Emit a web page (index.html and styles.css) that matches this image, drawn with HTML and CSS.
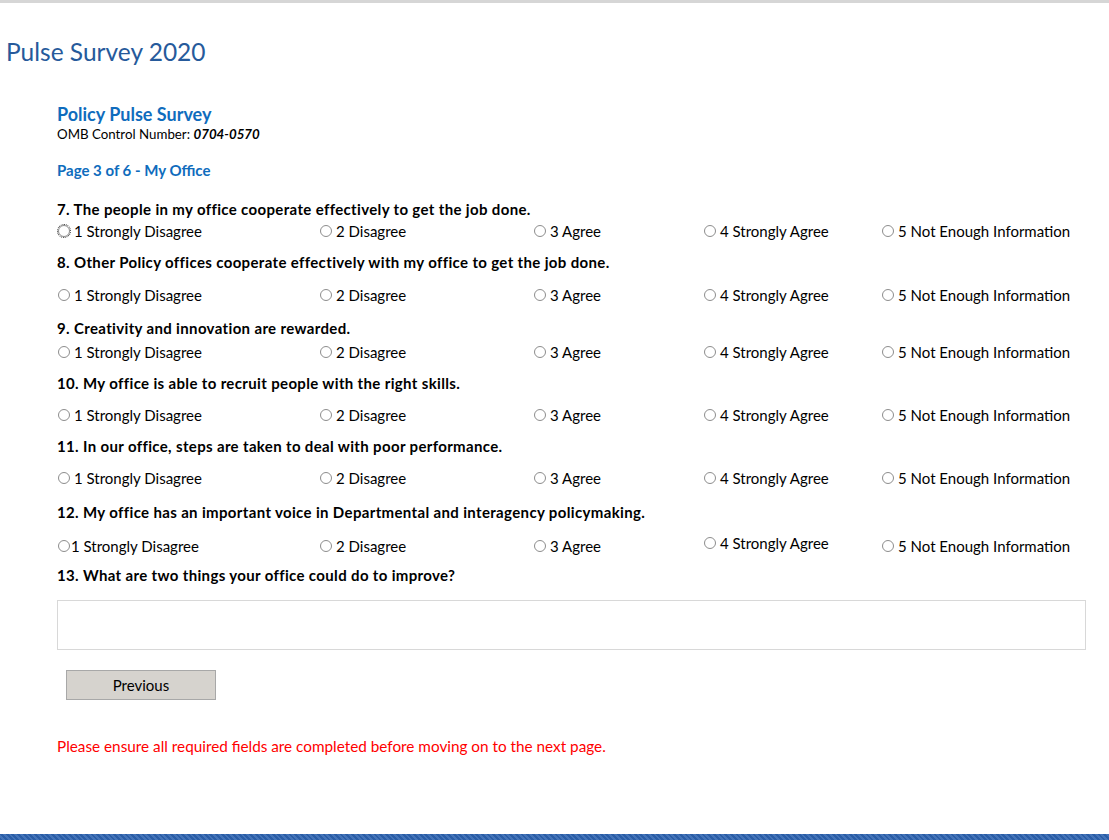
FILE: index.html
```html
<!DOCTYPE html>
<html lang="en">
<head>
    <meta charset="UTF-8">
    <meta name="viewport" content="width=device-width, initial-scale=1.0">
    <title>Pulse Survey 2020</title>
    <link rel="stylesheet" href="styles.css">
</head>
<body>
    <div class="page">
        <h1 class="site-title">Pulse Survey 2020</h1>

        <div class="survey">
            <h2 class="survey-name">Policy Pulse Survey</h2>
            <div class="omb">OMB Control Number: <strong><em>0704-0570</em></strong></div>

            <h3 class="page-title">Page 3 of 6 - My Office</h3>

            <div class="question q-first">
                <p class="q-label">7. The people in my office cooperate effectively to get the job done.</p>
                <div class="options">
                    <label><input type="radio" name="q7" class="focused"> 1 Strongly Disagree</label>
                    <label><input type="radio" name="q7"> 2 Disagree</label>
                    <label><input type="radio" name="q7"> 3 Agree</label>
                    <label><input type="radio" name="q7"> 4 Strongly Agree</label>
                    <label><input type="radio" name="q7"> 5 Not Enough Information</label>
                </div>
            </div>

            <div class="question q-loose">
                <p class="q-label">8. Other Policy offices cooperate effectively with my office to get the job done.</p>
                <div class="options">
                    <label><input type="radio" name="q8"> 1 Strongly Disagree</label>
                    <label><input type="radio" name="q8"> 2 Disagree</label>
                    <label><input type="radio" name="q8"> 3 Agree</label>
                    <label><input type="radio" name="q8"> 4 Strongly Agree</label>
                    <label><input type="radio" name="q8"> 5 Not Enough Information</label>
                </div>
            </div>

            <div class="question q-short">
                <p class="q-label">9. Creativity and innovation are rewarded.</p>
                <div class="options">
                    <label><input type="radio" name="q9"> 1 Strongly Disagree</label>
                    <label><input type="radio" name="q9"> 2 Disagree</label>
                    <label><input type="radio" name="q9"> 3 Agree</label>
                    <label><input type="radio" name="q9"> 4 Strongly Agree</label>
                    <label><input type="radio" name="q9"> 5 Not Enough Information</label>
                </div>
            </div>

            <div class="question q-mid">
                <p class="q-label">10. My office is able to recruit people with the right skills.</p>
                <div class="options">
                    <label><input type="radio" name="q10"> 1 Strongly Disagree</label>
                    <label><input type="radio" name="q10"> 2 Disagree</label>
                    <label><input type="radio" name="q10"> 3 Agree</label>
                    <label><input type="radio" name="q10"> 4 Strongly Agree</label>
                    <label><input type="radio" name="q10"> 5 Not Enough Information</label>
                </div>
            </div>

            <div class="question q-mid">
                <p class="q-label">11. In our office, steps are taken to deal with poor performance.</p>
                <div class="options">
                    <label><input type="radio" name="q11"> 1 Strongly Disagree</label>
                    <label><input type="radio" name="q11"> 2 Disagree</label>
                    <label><input type="radio" name="q11"> 3 Agree</label>
                    <label><input type="radio" name="q11"> 4 Strongly Agree</label>
                    <label><input type="radio" name="q11"> 5 Not Enough Information</label>
                </div>
            </div>

            <div class="question q-wide">
                <p class="q-label">12. My office has an important voice in Departmental and interagency policymaking.</p>
                <div class="options">
                    <label class="nogap"><input type="radio" name="q12">1 Strongly Disagree</label>
                    <label><input type="radio" name="q12"> 2 Disagree</label>
                    <label><input type="radio" name="q12"> 3 Agree</label>
                    <label class="raised"><input type="radio" name="q12"> 4 Strongly Agree</label>
                    <label><input type="radio" name="q12"> 5 Not Enough Information</label>
                </div>
            </div>

            <div class="question q-text">
                <p class="q-label">13. What are two things your office could do to improve?</p>
                <textarea class="answer-box"></textarea>
            </div>

            <button class="btn-prev">Previous</button>

            <p class="error">Please ensure all required fields are completed before moving on to the next page.</p>
        </div>
    </div>
    <footer class="bottom-bar"></footer>
</body>
</html>
```

FILE: styles.css
```css
body {
    margin: 0;
    font-family: 'Lato', 'Liberation Sans', sans-serif;
    color: #000;
    background: #fff;
    min-height: 100vh;
    display: flex;
    flex-direction: column;
    border-top: 3px solid #d6d6d6;
    box-sizing: border-box;
}

.page {
    flex: 1;
}

.site-title {
    margin: 34px 0 0 6px;
    font-size: 24.5px;
    font-weight: normal;
    color: #265a9b;
    line-height: 30px;
}

.survey {
    margin: 36px 0 0 57px;
    width: 1029px;
}

.survey-name {
    margin: 0;
    font-size: 18px;
    line-height: 22px;
    color: #0f6cbd;
}

.omb {
    font-size: 13.3px;
    line-height: 18px;
}

.page-title {
    margin: 17px 0 0;
    font-size: 15px;
    line-height: 20px;
    color: #0f6cbd;
}

.question {
    margin-top: 10px;
}

.q-label {
    margin: 0;
    font-size: 15px;
    font-weight: bold;
    letter-spacing: 0.35px;
    line-height: 21px;
}

.options {
    display: grid;
    grid-template-columns: 262px 214px 170px 178px auto;
    font-size: 15px;
    line-height: 22px;
}

/* spacing differs a little from row to row */
.q-first {
    margin-top: 19px;
}

.q-loose .options {
    margin-top: 11px;
}

.q-short {
    margin-top: 12px;
}

.q-short .options {
    margin-top: 2px;
}

.q-mid .options {
    margin-top: 10px;
}

.q-wide {
    margin-top: 13px;
}

.q-wide .options {
    margin-top: 12px;
}

.q-text {
    margin-top: 8px;
}

.options label {
    display: flex;
    align-items: center;
    white-space: nowrap;
}

.options label.raised {
    position: relative;
    top: -3px;
}

.options input {
    -webkit-appearance: none;
    appearance: none;
    width: 12px;
    height: 12px;
    margin: 0 4px 0 1px;
    border: 1px solid #8d8d8d;
    border-radius: 50%;
    background: #fff;
}

.options .nogap input {
    margin-right: 1px;
}

.options input.focused {
    outline: 1px dotted #333;
    outline-offset: 0;
}

.answer-box {
    display: block;
    width: 1029px;
    height: 50px;
    margin-top: 14px;
    box-sizing: border-box;
    border: 1px solid #d8d8d8;
    resize: none;
}

.btn-prev {
    display: block;
    margin: 20px 0 0 9px;
    width: 150px;
    height: 30px;
    background: #d6d3ce;
    border: 1px solid #a8a8a8;
    font-family: inherit;
    font-size: 15px;
    color: #000;
}

.error {
    margin: 37px 0 0;
    color: #f00;
    font-size: 15.3px;
}

.bottom-bar {
    height: 6px;
    background: repeating-linear-gradient(45deg, #2a5da6 0, #2a5da6 2px, #4373b8 2px, #4373b8 4px);
}
```
